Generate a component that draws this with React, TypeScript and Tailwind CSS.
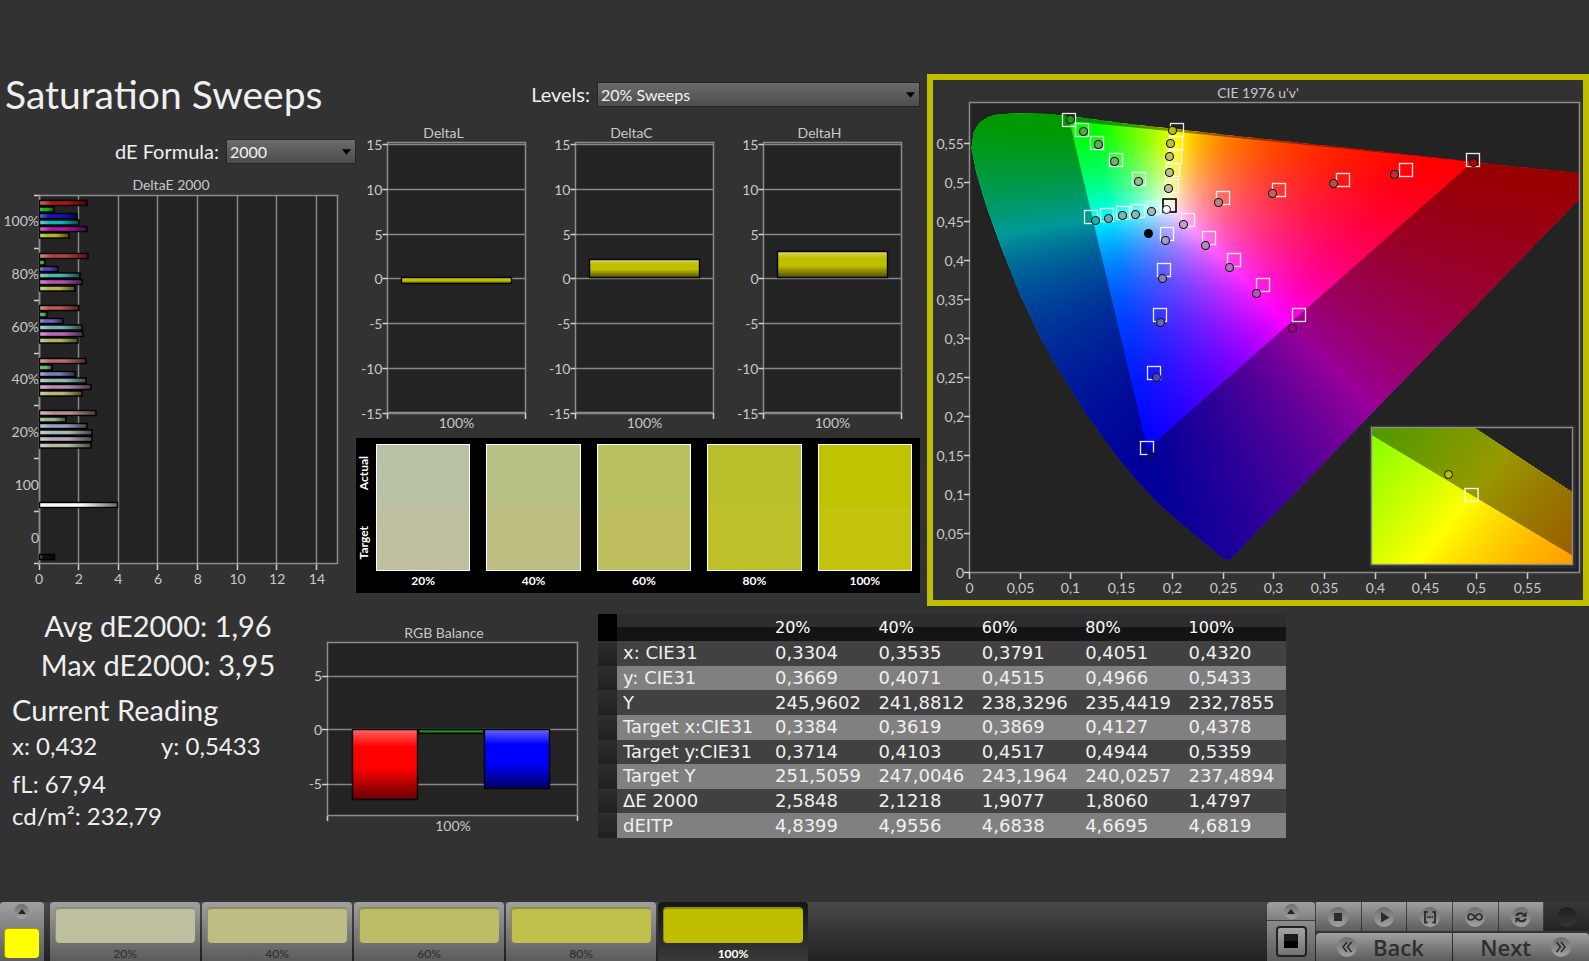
import type { ReactNode } from "react";

type Point = [number, number];

const GROUPS = [
  {
    y: 203,
    bars: [
      ["#b51217", 87],
      ["#1fae22", 54],
      ["#1212c8", 77],
      ["#12b5b5", 79],
      ["#b512b0", 87],
      ["#b5b51f", 69],
    ],
  },
  {
    y: 256,
    bars: [
      ["#bb3d3d", 88],
      ["#45b045", 45],
      ["#4a4ac0", 58],
      ["#55b0b0", 80],
      ["#bb4db8", 82],
      ["#b5b54d", 75],
    ],
  },
  {
    y: 308,
    bars: [
      ["#bb5555", 79],
      ["#5cb45c", 47],
      ["#6666bb", 63],
      ["#77b2b2", 82],
      ["#bb66bb", 83],
      ["#b4b45c", 78],
    ],
  },
  {
    y: 361,
    bars: [
      ["#bb6a6e", 86],
      ["#6cb46c", 52],
      ["#7c7cbb", 75],
      ["#8cb8b4", 86],
      ["#b888b8", 91],
      ["#b8b47c", 82],
    ],
  },
  {
    y: 413,
    bars: [
      ["#bb8c8c", 96],
      ["#92b892", 66],
      ["#9c9cbe", 87],
      ["#a4b8b4", 92],
      ["#b8a4b8", 92],
      ["#b8b8a0", 91],
    ],
  },
] as { y: number; bars: [string, number][] }[];

const LEVEL_ROWS = ["100%", "80%", "60%", "40%", "20%", "100", "0"];

const DELTAS = [
  { title: "DeltaL", top: 278, height: 6 },
  { title: "DeltaC", top: 260, height: 18 },
  { title: "DeltaH", top: 252, height: 26 },
];

const SWATCHES = [
  { label: "20%", actual: "bg-[#b9c1a4]", target: "bg-[#bfbf9f]" },
  { label: "40%", actual: "bg-[#b9c185]", target: "bg-[#bfbf82]" },
  { label: "60%", actual: "bg-[#b9c160]", target: "bg-[#bfbf5f]" },
  { label: "80%", actual: "bg-[#b9c02c]", target: "bg-[#bfbf2a]" },
  { label: "100%", actual: "bg-[#bfc300]", target: "bg-[#c4c30e]" },
];

const COLUMNS = ["20%", "40%", "60%", "80%", "100%"];

const ROWS = [
  ["x: CIE31", "0,3304", "0,3535", "0,3791", "0,4051", "0,4320"],
  ["y: CIE31", "0,3669", "0,4071", "0,4515", "0,4966", "0,5433"],
  ["Y", "245,9602", "241,8812", "238,3296", "235,4419", "232,7855"],
  ["Target x:CIE31", "0,3384", "0,3619", "0,3869", "0,4127", "0,4378"],
  ["Target y:CIE31", "0,3714", "0,4103", "0,4517", "0,4944", "0,5359"],
  ["Target Y", "251,5059", "247,0046", "243,1964", "240,0257", "237,4894"],
  ["ΔE 2000", "2,5848", "2,1218", "1,9077", "1,8060", "1,4797"],
  ["dEITP", "4,8399", "4,9556", "4,6838", "4,6695", "4,6819"],
];

const PATCHES = [
  { label: "20%", color: "bg-[#bdbf9f]" },
  { label: "40%", color: "bg-[#bebd84]" },
  { label: "60%", color: "bg-[#bdbd68]" },
  { label: "80%", color: "bg-[#bfbf4b]" },
  { label: "100%", color: "bg-[#bfbf00]" },
];

// spectral locus, CIE 1976 u'v'
const LOCUS: Point[] = [
  [0.2568, 0.0166], [0.2545, 0.0159], [0.2522, 0.0169], [0.2461, 0.0226],
  [0.2347, 0.035], [0.2161, 0.0549], [0.1877, 0.0871], [0.1665, 0.116],
  [0.1441, 0.151], [0.1125, 0.208], [0.0828, 0.2708], [0.0705, 0.2995],
  [0.0508, 0.353], [0.0312, 0.4165], [0.0165, 0.4698], [0.0065, 0.5131],
  [0.002, 0.5432], [0.0042, 0.5638], [0.01, 0.576], [0.0185, 0.583],
  [0.0275, 0.5863], [0.04, 0.5872], [0.0501, 0.5874], [0.0792, 0.5866],
  [0.1127, 0.5815], [0.1531, 0.5748], [0.2026, 0.5674], [0.2623, 0.5588],
  [0.3315, 0.5492], [0.4035, 0.539], [0.4692, 0.5296], [0.5203, 0.5219],
  [0.583, 0.5135], [0.6234, 0.5075],
];

const GAMUT: Point[] = [
  [0.4964, 0.5256],
  [0.0986, 0.5777],
  [0.1754, 0.1579],
];

// target x/y, measured x/y, fill of the measured dot
const MARKERS: [number, number, number, number, string][] = [
  [1069, 120, 1070, 120, "#1e9a1e"],
  [1082, 130, 1083, 132, "#46ac46"],
  [1097, 143, 1098, 145, "#5cae5c"],
  [1116, 160, 1114, 162, "#78b078"],
  [1139, 179, 1138, 182, "#98b898"],
  [1177, 130, 1172, 131, "#bfbf00"],
  [1176, 143, 1170, 144, "#bfbf40"],
  [1175, 157, 1169, 157, "#bfbf66"],
  [1173, 170, 1169, 173, "#bfbf84"],
  [1172, 186, 1168, 189, "#bfbfa0"],
  [1091, 217, 1095, 221, "#12b5b0"],
  [1107, 215, 1108, 219, "#55b4b0"],
  [1123, 213, 1122, 216, "#74b8b4"],
  [1138, 211, 1135, 215, "#8cb8b4"],
  [1154, 208, 1151, 212, "#a4b8b8"],
  [1167, 234, 1165, 241, "#a0a0c4"],
  [1164, 270, 1162, 279, "#8080bf"],
  [1160, 315, 1160, 323, "#6464bb"],
  [1154, 373, 1156, 378, "#4848c0"],
  [1147, 448, 1151, 457, "#0000a8"],
  [1188, 220, 1183, 225, "#bca4bc"],
  [1209, 238, 1205, 246, "#bc88bc"],
  [1234, 260, 1229, 268, "#bc6cbc"],
  [1263, 285, 1256, 294, "#bc50bc"],
  [1299, 315, 1292, 329, "#a0008c"],
  [1223, 198, 1218, 203, "#bc8484"],
  [1279, 190, 1272, 194, "#bc6464"],
  [1343, 180, 1333, 184, "#bc4c4c"],
  [1406, 170, 1394, 175, "#bc3030"],
  [1473, 160, 1473, 163, "#b00000"],
];

function channel(c: number) {
  return Math.round(255 * Math.max(0, c));
}

// u'v' to RGB, scaled so that the strongest channel is full
function chroma(u: number, v: number) {
  const d = 6 * u - 16 * v + 12;
  const x = (9 * u) / d;
  const y = (4 * v) / d;
  const z = 1 - x - y;
  const r = 3.2406 * x - 1.5372 * y - 0.4986 * z;
  const g = -0.9689 * x + 1.8758 * y + 0.0415 * z;
  const b = 0.0557 * x - 0.204 * y + 1.057 * z;
  const m = Math.max(r, g, b);
  return `rgb(${channel(r / m)},${channel(g / m)},${channel(b / m)})`;
}

type FieldProps = {
  id: string;
  x: number;
  y: number;
  width: number;
  height: number;
  toU: (x: number, y: number) => number;
  toV: (y: number) => number;
  fromU: (u: number) => number;
  fromV: (v: number) => number;
};

// Chromaticity colours in thin horizontal strips, clipped to the locus
function ChromaField({ id, x, y, width, height, toU, toV, fromU, fromV }: FieldProps) {
  const step = 2;
  const strips = Array.from({ length: Math.ceil(height / step) }, (_, i) => y + i * step);
  const stops = Array.from({ length: 81 }, (_, i) => i / 80);
  const outline = (pts: Point[]) =>
    "M" + pts.map(([u, v]) => `${fromU(u).toFixed(1)} ${fromV(v).toFixed(1)}`).join("L") + "Z";

  return (
    <g clipPath={`url(#${id}-plot)`}>
      <defs>
        <clipPath id={`${id}-plot`}>
          <rect x={x} y={y} width={width} height={height} />
        </clipPath>
        <clipPath id={`${id}-locus`}>
          <path d={outline(LOCUS)} />
        </clipPath>
        {strips.map((sy, i) => (
          <linearGradient key={sy} id={`${id}-${i}`}>
            {stops.map((t) => (
              <stop key={t} offset={t} stopColor={chroma(toU(x + t * width, sy), toV(sy + step / 2))} />
            ))}
          </linearGradient>
        ))}
      </defs>
      <g clipPath={`url(#${id}-locus)`}>
        {strips.map((sy, i) => (
          <rect key={sy} x={x} y={sy} width={width} height={step + 1} fill={`url(#${id}-${i})`} />
        ))}
        <path d={outline(LOCUS) + outline(GAMUT)} fillRule="evenodd" fill="#000" fillOpacity="0.4" />
      </g>
    </g>
  );
}

function Shade({ id, vertical }: { id: string; vertical?: boolean }) {
  return (
    <linearGradient id={id} x1="0" y1="0" x2={vertical ? "0" : "1"} y2={vertical ? "1" : "0"}>
      <stop offset="0" stopColor="#fff" stopOpacity="0.4" />
      <stop offset="0.25" stopColor="#fff" stopOpacity="0" />
      <stop offset="0.55" stopColor="#000" stopOpacity="0" />
      <stop offset="1" stopColor="#000" stopOpacity="0.6" />
    </linearGradient>
  );
}

type BarProps = { x: number; y: number; width: number; height: number; fill: string; shade: string };

function Bar({ shade, fill, ...box }: BarProps) {
  return (
    <>
      <rect {...box} fill={fill} />
      <rect {...box} fill={`url(#${shade})`} stroke="#000" strokeWidth="1.4" />
    </>
  );
}

function DeltaEChart() {
  return (
    <svg viewBox="0 174 356 420" className="mt-[10px] h-[420px] w-[356px]" fontSize="14" fill="#c8c8c8">
      <defs>
        <Shade id="shade-x" />
      </defs>
      <text x="171" y="190" textAnchor="middle">DeltaE 2000</text>
      <rect x="39.5" y="195" width="298" height="368.5" fill="#232323" />
      {[0, 1, 2, 3, 4, 5, 6, 7].map((i) => (
        <g key={i} strokeWidth="1.5">
          <path d={`M${Math.round(39.5 + i * 39.6) - 0.5} 195V563`} stroke="#868686" />
          <path d={`M${Math.round(39.5 + i * 39.6) - 0.5} 564V570`} stroke="#d0d0d0" />
          <path d={`M34 ${Math.round(195 + i * 52.6)}.5H40`} stroke="#d0d0d0" />
          <text x={39 + i * 39.7} y="584" textAnchor="middle" stroke="none">{i * 2}</text>
        </g>
      ))}
      <rect x="39.5" y="195.5" width="298" height="368" fill="none" stroke="#8c8c8c" strokeWidth="1.5" />
      {LEVEL_ROWS.map((label, i) => (
        <text key={i} x="39" y={Math.round(226 + i * 52.8)} textAnchor="end">{label}</text>
      ))}
      {GROUPS.map((g) =>
        g.bars.map(([color, end], i) => (
          <Bar key={g.y + color} x={39.5} y={g.y - 2.5 + i * 6.5} width={end - 39.5} height={5} fill={color} shade="shade-x" />
        ))
      )}
      <Bar x={39.5} y={502.5} width={78} height={5} fill="#fafafa" shade="shade-x" />
      <Bar x={39.5} y={554.5} width={15} height={5} fill="#101010" shade="shade-x" />
    </svg>
  );
}

function DeltaCharts() {
  return (
    <svg viewBox="356 117 564 321" className="mt-[10px] h-[321px] w-[564px]" fontSize="14" fill="#c8c8c8">
      <defs>
        <Shade id="shade-y" vertical />
      </defs>
      {DELTAS.map((d, n) => {
        const left = 387.5 + n * 188;
        return (
          <g key={d.title} strokeWidth="1.5">
            <text x={left + 56} y="138" textAnchor="middle">{d.title}</text>
            <rect x={left} y="142.5" width="138" height="270" fill="#232323" stroke="#8c8c8c" />
            {[15, 10, 5, 0, -5, -10, -15].map((value, i) => {
              const y = Math.round(144 + i * 44.8) + 0.5;
              return (
                <g key={value}>
                  <path d={`M${left} ${y}h138`} stroke="#868686" />
                  <path d={`M${left - 5} ${y}h5`} stroke="#d0d0d0" />
                  <text x={left - 5} y={y + 5} textAnchor="end">{value}</text>
                </g>
              );
            })}
            <path d={`M${left} 413v6M${left + 138} 413v6`} stroke="#d0d0d0" />
            <Bar x={left + 14} y={d.top - 0.5} width={110} height={d.height} fill="#bfbf00" shade="shade-y" />
            <text x={left + 69} y="428" textAnchor="middle">100%</text>
          </g>
        );
      })}
    </svg>
  );
}

function SwatchPanel() {
  return (
    <div className="flex h-[155px] bg-black pr-2 text-[12px] font-bold text-white">
      <div className="flex w-5 flex-col items-center justify-around pr-1 pb-4 leading-4">
        <span className="rotate-180 [writing-mode:vertical-rl]">Actual</span>
        <span className="rotate-180 [writing-mode:vertical-rl]">Target</span>
      </div>
      <div className="grid flex-1 grid-cols-5 gap-4 pt-[6px]">
        {SWATCHES.map((s) => (
          <div key={s.label} className="text-center leading-5">
            <div className="h-[127px] border border-white">
              <div className={`h-1/2 ${s.actual}`} />
              <div className={`h-1/2 ${s.target}`} />
            </div>
            {s.label}
          </div>
        ))}
      </div>
    </div>
  );
}

function CieChart() {
  return (
    <svg viewBox="933 80 650 520" className="block w-full bg-[#323232]" fontSize="14" fill="#c8c8c8">
      <text x="1258" y="98" textAnchor="middle">CIE 1976 u'v'</text>
      <rect x="970" y="103" width="610" height="470" fill="#232323" />
      <ChromaField
        id="main"
        x={970}
        y={103}
        width={610}
        height={470}
        toU={(x) => (x - 969.5) / 1014}
        toV={(y) => (572.5 - y) / 781.4}
        fromU={(u) => 969.5 + u * 1014}
        fromV={(v) => 572.5 - v * 781.4}
      />
      <rect x="969.5" y="102.5" width="610" height="470" fill="none" stroke="#8c8c8c" strokeWidth="1.5" />
      {Array.from({ length: 12 }, (_, i) => {
        const label = String((i * 5) / 100).replace(".", ",");
        const x = Math.round(969 + i * 50.7) + 0.5;
        const y = Math.round(572 - i * 39) + 0.5;
        return (
          <g key={i}>
            <path d={`M${x} 573v6M964 ${y}h6`} stroke="#d0d0d0" strokeWidth="1.5" />
            <text x={x} y="593" textAnchor="middle">{label}</text>
            <text x="964" y={y + 5} textAnchor="end">{label}</text>
          </g>
        );
      })}
      {MARKERS.map(([tx, ty]) => (
        <rect key={`${tx}-${ty}`} x={tx - 6.5} y={ty - 6.5} width="13" height="13" fill="none" stroke="#fff" strokeWidth="1.3" strokeOpacity="0.9" />
      ))}
      <rect x="1163" y="199" width="13" height="13" fill="none" stroke="#000" strokeWidth="1.6" />
      {MARKERS.map(([, , mx, my, fill]) => (
        <circle key={`${mx}-${my}`} cx={mx + 0.5} cy={my - 0.5} r="4" fill={fill} stroke="#111" strokeWidth="1.1" />
      ))}
      <circle cx="1166.5" cy="209.5" r="4" fill="#fff" stroke="#111" />
      <circle cx="1148.5" cy="233.5" r="4.5" fill="#000" />

      {/* Magnified view around the selected point */}
      <rect x="1369" y="425" width="207" height="143" fill="#2d2d2d" />
      <rect x="1371" y="427" width="202" height="138" fill="#232323" />
      <ChromaField
        id="zoom"
        x={1372}
        y={428}
        width={200}
        height={136}
        toU={(x, y) => 0.2047 + (x - 1471.5 + 0.8 * (y - 495)) / 4583}
        toV={(y) => 0.5638 - (y - 495) / 21000}
        fromU={(u) => 1471.5 + (u - 0.2047) * 4583}
        fromV={(v) => 495 - (v - 0.5638) * 21000}
      />
      <rect x="1371.5" y="427.5" width="201" height="137" fill="none" stroke="#8c8c8c" strokeWidth="1.4" />
      <rect x="1465" y="488.5" width="13" height="13" fill="none" stroke="#fff" strokeWidth="1.3" />
      <circle cx="1448.5" cy="474.5" r="4" fill="#bfbf00" stroke="#111" />
    </svg>
  );
}

function RgbBalance() {
  return (
    <svg viewBox="300 616 290 224" className="mt-[10px] h-[224px] w-[290px] shrink-0" fontSize="14" fill="#c8c8c8">
      <text x="444" y="638" textAnchor="middle">RGB Balance</text>
      <rect x="327.5" y="642.5" width="250" height="173" fill="#232323" stroke="#8c8c8c" strokeWidth="1.5" />
      {[5, 0, -5].map((value, i) => (
        <g key={value} strokeWidth="1.5">
          <path d={`M328 ${676.5 + i * 54 - (i === 1 ? 1 : 0)}h249`} stroke="#868686" />
          <path d={`M322 ${676.5 + i * 54 - (i === 1 ? 1 : 0)}h6`} stroke="#d0d0d0" />
          <text x="322" y={681 + i * 54} textAnchor="end">{value}</text>
        </g>
      ))}
      <path d="M327.5 816v5M577.5 816v5" stroke="#d0d0d0" strokeWidth="1.5" />
      <Bar x={352.5} y={729.5} width={65} height={70} fill="#ff0000" shade="shade-y" />
      <Bar x={418.5} y={729.5} width={65} height={4} fill="#1f8a1f" shade="shade-y" />
      <Bar x={484.5} y={729.5} width={65} height={59} fill="#0000ff" shade="shade-y" />
      <text x="453" y="831" textAnchor="middle">100%</text>
    </svg>
  );
}

function Readings() {
  return (
    <div className="w-[300px] shrink-0 text-[#efefef]">
      <div className="pl-4 text-center text-[29px] leading-[39px]">
        <p>Avg dE2000: 1,96</p>
        <p>Max dE2000: 3,95</p>
      </div>
      <h2 className="mt-2 pl-3 text-[29px] leading-9">Current Reading</h2>
      <div className="grid grid-cols-2 pl-3 text-[24px] leading-9">
        <p>x: 0,432</p>
        <p className="pl-[5px]">y: 0,5433</p>
      </div>
      <div className="pt-1 pl-3 text-[24px] leading-8">
        <p>fL: 67,94</p>
        <p>cd/m²: 232,79</p>
      </div>
    </div>
  );
}

function ResultsTable() {
  return (
    <table className="mt-2 ml-2 h-[224px] w-[688px] table-fixed border-collapse self-start text-left font-['DejaVu_Sans'] text-[18px] leading-6 text-[#f0f0f0]">
      <thead>
        <tr className="h-[27px] bg-linear-to-b from-[#2d2d2d] from-50% to-[#141414] to-50% text-[16px] text-white">
          <th className="w-[19px] bg-black" />
          <th className="w-[152px]" />
          {COLUMNS.map((c) => (
            <th key={c} scope="col" className="p-0 pl-[6px] font-normal">
              {c}
            </th>
          ))}
        </tr>
      </thead>
      <tbody>
        {ROWS.map(([name, ...values]) => (
          <tr key={name} className="odd:bg-[#414141] even:bg-[#808080]">
            <td className="bg-linear-to-b from-[#2e2e2e] to-[#202020]" />
            <th scope="row" className="p-0 pl-[6px] font-normal whitespace-nowrap">
              {name}
            </th>
            {values.map((v, i) => (
              <td key={i} className="p-0 pl-[6px]">
                {v}
              </td>
            ))}
          </tr>
        ))}
      </tbody>
    </table>
  );
}

function SelectBox({ id, value, className }: { id: string; value: string; className: string }) {
  return (
    <div className={`relative h-[25px] ${className}`}>
      <select
        id={id}
        className="h-full w-full appearance-none border border-[#262626] bg-linear-to-b from-[#6c6c6c] to-[#4c4c4c] pt-[1px] pl-[3px] text-[16px] leading-[22px] text-[#f2f2f2]"
      >
        <option>{value}</option>
      </select>
      <svg viewBox="0 0 10 6" className="pointer-events-none absolute top-[10px] right-[5px] h-[6px] w-[9px]">
        <path d="M0 0H10L5 6Z" fill="#000" />
      </svg>
    </div>
  );
}

function Disc({ children, className = "size-5" }: { children?: ReactNode; className?: string }) {
  return (
    <span className={`flex items-center justify-center rounded-full bg-linear-to-b from-[#6e6e6e] to-[#a2a2a2] ${className}`}>
      {children}
    </span>
  );
}

function UpDisc() {
  return (
    <Disc className="size-[15px]">
      <svg viewBox="0 0 8 5" className="h-[5px] w-2">
        <path d="M0 5L4 0L8 5Z" fill="#222" />
      </svg>
    </Disc>
  );
}

const TRANSPORT: { name: string; icon: ReactNode }[] = [
  { name: "Stop", icon: <rect x="6" y="6" width="8" height="8" fill="#2a2a2a" /> },
  { name: "Play", icon: <path d="M7 5L15.5 10.5L7 15.5Z" fill="#2a2a2a" /> },
  {
    name: "Read range",
    icon: (
      <g fill="none" stroke="#2a2a2a" strokeWidth="1.8">
        <path d="M7.5 5H5V15.5H7.5M12.5 5H15V15.5H12.5" />
        <path d="M7 10.2H13" strokeDasharray="1.6 0.7" />
      </g>
    ),
  },
  {
    name: "Loop",
    icon: (
      <path
        d="M10 10C8.5 7.5 7.3 7 6 7C4.3 7 3 8.3 3 10C3 11.7 4.3 13 6 13C7.3 13 8.5 12.5 10 10C11.5 7.5 12.7 7 14 7C15.7 7 17 8.3 17 10C17 11.7 15.7 13 14 13C12.7 13 11.5 12.5 10 10Z"
        fill="none"
        stroke="#2a2a2a"
        strokeWidth="1.6"
      />
    ),
  },
  {
    name: "Refresh",
    icon: (
      <>
        <path d="M5.2 9C6 6.5 9.5 5.2 12.5 7.3M14.8 11.5C14 14 10.5 15.3 7.5 13.2" fill="none" stroke="#2a2a2a" strokeWidth="2.2" />
        <path d="M15.5 4.5V9.8H10.3ZM4.5 16V10.7H9.7Z" fill="#2a2a2a" />
      </>
    ),
  },
];

const metal = "bg-linear-to-b from-[#a0a0a0] to-[#5c5c5c]";

function Toolbar() {
  return (
    <footer className="flex h-[59px] bg-linear-to-b from-[#494949] to-[#222222]">
      <button aria-label="Open colour list" className={`flex w-11 flex-col items-center justify-between rounded-t pt-[2px] pr-[1px] pb-[3px] ${metal}`}>
        <UpDisc />
        <span className="h-[30px] w-[35px] rounded-sm border-t border-l border-[#a0a000] bg-[#ffff00]" />
      </button>
      <div className="ml-[6px] flex gap-[2px]">
        {PATCHES.map((p, i) => {
          const active = i === PATCHES.length - 1;
          return (
            <button
              key={p.label}
              className={`w-[150px] rounded-t px-[5px] pt-[5px] text-[12px] leading-[17px] ${
                active
                  ? "bg-linear-to-b from-[#161616] to-[#3a3a3a] font-bold text-white"
                  : "bg-linear-to-b from-[#a0a0a0] to-[#5c5c5c] text-[#2a2a2a]"
              }`}
            >
              <span className={`block h-9 rounded border-t-2 border-l border-black/25 ${p.color}`} />
              <span className="block pt-[2px]">{p.label}</span>
            </button>
          );
        })}
      </div>

      <div className="ml-auto flex w-[48px] flex-col gap-[1px]">
        <button aria-label="Open window list" className="flex h-[18px] items-center justify-center rounded-t bg-linear-to-b from-[#a0a0a0] to-[#808080]">
          <UpDisc />
        </button>
        <button aria-label="Pattern window" className="flex flex-1 items-center justify-center bg-linear-to-b from-[#8c8c8c] to-[#5c5c5c]">
          <span className="flex h-[31px] w-[31px] items-center justify-center rounded border-2 border-[#222] bg-linear-to-b from-[#a4a4a4] to-[#747474]">
            <span className="size-[14px] bg-linear-to-b from-[#1c1c1c] from-50% to-black to-50%" />
          </span>
        </button>
      </div>
      <div className="ml-[1px] flex w-[273px] flex-col gap-[2px]">
        <div className="grid h-[29px] grid-cols-6 gap-[1px]">
          {TRANSPORT.map((t) => (
            <button key={t.name} aria-label={t.name} className={`flex items-center justify-center ${metal}`}>
              <Disc>
                <svg viewBox="0 0 20 20" className="size-5">
                  {t.icon}
                </svg>
              </Disc>
            </button>
          ))}
          <button aria-label="Record" className="flex items-center justify-center bg-linear-to-b from-[#383838] to-[#242424]">
            <span className="size-5 rounded-full bg-linear-to-b from-[#1e1e1e] to-[#363636]" />
          </button>
        </div>
        <div className="grid flex-1 grid-cols-2 gap-[1px] font-['Open_Sans'] text-[22px] leading-7 font-semibold text-[#2e2e2e]">
          <button className={`flex items-center gap-4 overflow-hidden rounded-tl pl-[21px] ${metal}`}>
            <Disc>
              <svg viewBox="0 0 20 20" className="size-5" fill="none" stroke="#2a2a2a" strokeWidth="1.6">
                <path d="M10 5L6 10L10 15M14.5 5L10.5 10L14.5 15" />
              </svg>
            </Disc>
            Back
          </button>
          <button className={`flex items-center justify-end gap-5 overflow-hidden rounded-tr pr-[18px] ${metal}`}>
            Next
            <Disc>
              <svg viewBox="0 0 20 20" className="size-5" fill="none" stroke="#2a2a2a" strokeWidth="1.6">
                <path d="M5.5 5L9.5 10L5.5 15M10 5L14 10L10 15" />
              </svg>
            </Disc>
          </button>
        </div>
      </div>
    </footer>
  );
}

export default function App() {
  return (
    <div className="flex min-h-screen flex-col bg-[#323232] font-['Lato',sans-serif] text-[#efefef]">
      <main className="flex-1 pt-[74px]">
        <div className="flex items-start">
          {/* Overall errors */}
          <section className="w-[356px] shrink-0">
            <h1 className="pl-[5px] text-[39px] leading-10">Saturation Sweeps</h1>
            <div className="mt-[25px] flex h-[25px] items-center justify-end gap-[7px]">
              <label htmlFor="formula" className="pb-[2px] text-[20px] leading-6">
                dE Formula:
              </label>
              <SelectBox id="formula" value="2000" className="w-[130px]" />
            </div>
            <DeltaEChart />
          </section>

          {/* Sweep level detail */}
          <section className="w-[564px] shrink-0 pt-2">
            <div className="flex h-[25px] items-center justify-end gap-[7px]">
              <label htmlFor="levels" className="pb-[2px] text-[20px] leading-6">
                Levels:
              </label>
              <SelectBox id="levels" value="20% Sweeps" className="w-[323px]" />
            </div>
            <DeltaCharts />
            <SwatchPanel />
          </section>

          <section className="ml-[7px] flex-1 border-6 border-[#bfbf00]">
            <CieChart />
          </section>
        </div>

        <div className="flex">
          <Readings />
          <RgbBalance />
          <ResultsTable />
        </div>
      </main>
      <Toolbar />
    </div>
  );
}
